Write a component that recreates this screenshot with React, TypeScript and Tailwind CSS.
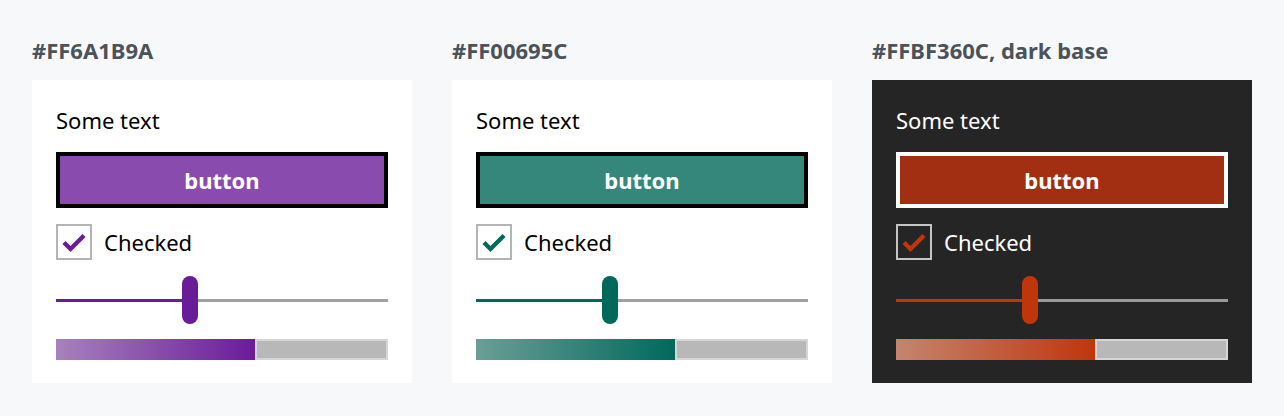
const font = { fontFamily: '"Noto Sans", "Open Sans", sans-serif' };

type Theme = {
  title: string;
  dark?: boolean;
};

function Check({ color }: { color: string }) {
  return (
    <svg width="26" height="26" viewBox="0 0 26 26" fill="none">
      <path d="M3 13.5 L9.5 20 L23 6.5" stroke={color} strokeWidth="4.4" strokeLinecap="butt" strokeLinejoin="miter" />
    </svg>
  );
}

function Swatch({ title, dark, children }: Theme & { children: React.ReactNode }) {
  return (
    <div className="flex w-[380px] flex-col">
      <h2 className="text-[22px] font-bold leading-7 text-[#4b5259]">{title}</h2>
      <div className={`mt-[16px] flex flex-col px-6 pt-[26px] pb-[23px] ${dark ? 'bg-[#252525] text-white' : 'bg-white text-black'}`}>
        {children}
      </div>
    </div>
  );
}

export default function App() {
  return (
    <div className="min-h-[416px] w-[1284px] bg-[#f7f8fa] px-8 pt-9" style={font}>
      <div className="flex gap-10">
        {/* purple */}
        <Swatch title="#FF6A1B9A">
          <p className="text-[22px] leading-7">Some text</p>
          <button className="mt-[18px] h-[56px] w-full border-4 border-black bg-[#8a4baf] text-[22px] font-bold text-white">
            button
          </button>
          <div className="mt-4 flex h-9 items-center gap-3">
            <div className="flex h-9 w-9 items-center justify-center border-2 border-[#b4b4b4]">
              <Check color="#6a1b9a" />
            </div>
            <span className="text-[22px] leading-7">Checked</span>
          </div>
          <div className="mt-4 flex h-12 items-center">
            <div className="h-[3px] w-[126px] bg-[#6a1b9a]" />
            <div className="h-12 w-4 rounded-full bg-[#6a1b9a]" />
            <div className="h-[3px] flex-1 bg-[#a0a0a0]" />
          </div>
          <div className="mt-[15px] flex h-[21px]">
            <div className="h-full w-[199px] bg-[linear-gradient(to_right,#a682bd,#6a1b9a)]" />
            <div className="h-full flex-1 border-2 border-[#d6d6d6] bg-[#b8b8b8]" />
          </div>
        </Swatch>

        {/* teal */}
        <Swatch title="#FF00695C">
          <p className="text-[22px] leading-7">Some text</p>
          <button className="mt-[18px] h-[56px] w-full border-4 border-black bg-[#35877b] text-[22px] font-bold text-white">
            button
          </button>
          <div className="mt-4 flex h-9 items-center gap-3">
            <div className="flex h-9 w-9 items-center justify-center border-2 border-[#b4b4b4]">
              <Check color="#00695c" />
            </div>
            <span className="text-[22px] leading-7">Checked</span>
          </div>
          <div className="mt-4 flex h-12 items-center">
            <div className="h-[3px] w-[126px] bg-[#00695c]" />
            <div className="h-12 w-4 rounded-full bg-[#00695c]" />
            <div className="h-[3px] flex-1 bg-[#a0a0a0]" />
          </div>
          <div className="mt-[15px] flex h-[21px]">
            <div className="h-full w-[199px] bg-[linear-gradient(to_right,#6b9e96,#00695c)]" />
            <div className="h-full flex-1 border-2 border-[#d6d6d6] bg-[#b8b8b8]" />
          </div>
        </Swatch>

        {/* orange, dark base */}
        <Swatch title="#FFBF360C, dark base" dark>
          <p className="text-[22px] leading-7">Some text</p>
          <button className="mt-[18px] h-[56px] w-full border-4 border-white bg-[#a32f12] text-[22px] font-bold text-white">
            button
          </button>
          <div className="mt-4 flex h-9 items-center gap-3">
            <div className="flex h-9 w-9 items-center justify-center border-2 border-[#c4c4c4]">
              <Check color="#bf360c" />
            </div>
            <span className="text-[22px] leading-7">Checked</span>
          </div>
          <div className="mt-4 flex h-12 items-center">
            <div className="h-[3px] w-[126px] bg-[#bf360c]" />
            <div className="h-12 w-4 rounded-full bg-[#bf360c]" />
            <div className="h-[3px] flex-1 bg-[#9a9a9a]" />
          </div>
          <div className="mt-[15px] flex h-[21px]">
            <div className="h-full w-[199px] bg-[linear-gradient(to_right,#c4856f,#bf360c)]" />
            <div className="h-full flex-1 border-2 border-[#d6d6d6] bg-[#b8b8b8]" />
          </div>
        </Swatch>
      </div>
    </div>
  );
}
